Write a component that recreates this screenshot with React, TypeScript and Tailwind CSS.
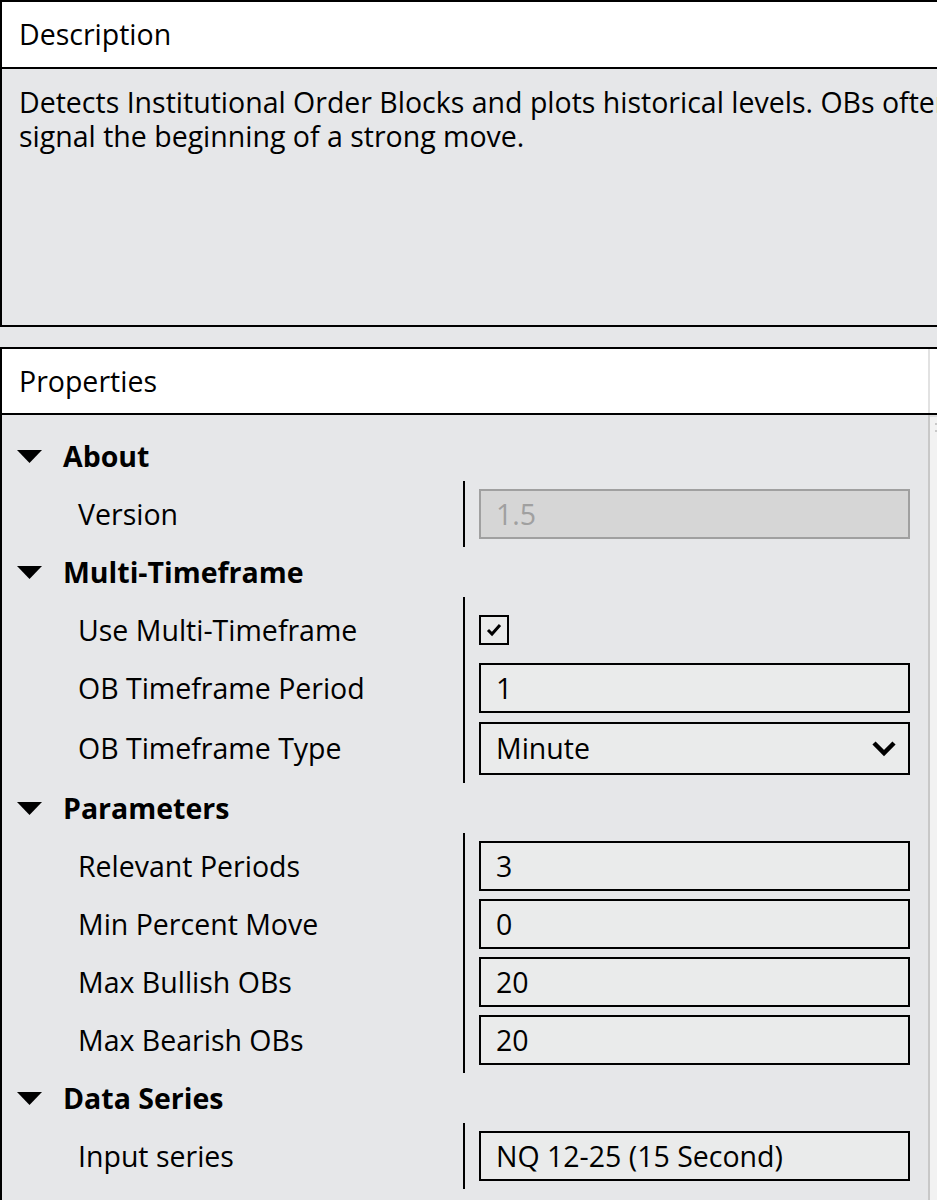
import React from 'react';

type Prop = { label: string; kind: 'disabled' | 'text' | 'check' | 'select'; value?: string };
type Group = { title: string; props: Prop[] };

const groups: Group[] = [
  { title: 'About', props: [{ label: 'Version', kind: 'disabled', value: '1.5' }] },
  {
    title: 'Multi-Timeframe',
    props: [
      { label: 'Use Multi-Timeframe', kind: 'check' },
      { label: 'OB Timeframe Period', kind: 'text', value: '1' },
      { label: 'OB Timeframe Type', kind: 'select', value: 'Minute' },
    ],
  },
  {
    title: 'Parameters',
    props: [
      { label: 'Relevant Periods', kind: 'text', value: '3' },
      { label: 'Min Percent Move', kind: 'text', value: '0' },
      { label: 'Max Bullish OBs', kind: 'text', value: '20' },
      { label: 'Max Bearish OBs', kind: 'text', value: '20' },
    ],
  },
  { title: 'Data Series', props: [{ label: 'Input series', kind: 'text', value: 'NQ 12-25 (15 Second)' }] },
];

const Triangle = () => (
  <svg width="25" height="13" viewBox="0 0 25 13">
    <polygon points="0,0 25,0 12.5,13" fill="#000" />
  </svg>
);

const Value = ({ p }: { p: Prop }) => {
  if (p.kind === 'check') {
    return (
      <div className="w-[30px] h-[30px] border-2 border-black bg-[#eaebeb] flex items-center justify-center">
        <svg width="16" height="14" viewBox="0 0 16 14">
          <polyline points="2,7 6,11 14,2" fill="none" stroke="#000" strokeWidth="3" />
        </svg>
      </div>
    );
  }
  if (p.kind === 'disabled') {
    return (
      <div className="w-[431px] h-[50px] border-2 border-[#a0a0a0] bg-[#d6d6d6] text-[#a0a0a0] flex items-center pl-[15px]">
        {p.value}
      </div>
    );
  }
  if (p.kind === 'select') {
    return (
      <div className="w-[431px] h-[53px] border-2 border-black bg-[#eaebeb] flex items-center justify-between pl-[15px] pr-[11px]">
        <span>{p.value}</span>
        <svg width="26" height="18" viewBox="0 0 26 18">
          <polyline points="3,4 13,14 23,4" fill="none" stroke="#000" strokeWidth="4.5" />
        </svg>
      </div>
    );
  }
  return (
    <div className="w-[431px] h-[50px] border-2 border-black bg-[#eaebeb] flex items-center pl-[15px]">{p.value}</div>
  );
};

export default function App() {
  return (
    <div className="w-[937px] h-[1200px] overflow-hidden bg-[#e6e7e9] text-black text-[28.5px] font-['Open_Sans',sans-serif]">
      <section className="w-[1000px] h-[327px] border-2 border-black flex flex-col">
        <div className="h-[67px] bg-white border-b-2 border-black flex items-center pl-[17px]">Description</div>
        <div className="flex-1 pl-[17px] pt-[16px] leading-[34px] whitespace-nowrap">
          Detects Institutional Order Blocks and plots historical levels. OBs often
          <br />
          signal the beginning of a strong move.
        </div>
      </section>

      <section className="mt-[20px] w-[1000px] h-[900px] border-2 border-black flex flex-col">
        <div className="h-[66px] bg-white border-b-2 border-black flex">
          <div className="w-[926px] flex items-center pl-[17px]">Properties</div>
          <div className="w-[2px] bg-[#e2e2e2]" />
        </div>
        <div className="flex flex-1">
          <div className="w-[926px] pt-[16px]">
            {groups.map((g) => (
              <div key={g.title}>
                <div className="h-[50px] flex items-center pl-[15px] gap-[21px]">
                  <Triangle />
                  <span className="font-bold">{g.title}</span>
                </div>
                <div className="flex">
                  <div className="w-[461px] py-1">
                    {g.props.map((p) => (
                      <div
                        key={p.label}
                        className={`${p.kind === 'select' ? 'h-[62px]' : 'h-[58px]'} flex items-center pl-[76px]`}
                      >
                        {p.label}
                      </div>
                    ))}
                  </div>
                  <div className="border-l-2 border-black py-1 pl-[14px]">
                    {g.props.map((p) => (
                      <div
                        key={p.label}
                        className={`${p.kind === 'select' ? 'h-[62px]' : 'h-[58px]'} flex items-center`}
                      >
                        <Value p={p} />
                      </div>
                    ))}
                  </div>
                </div>
              </div>
            ))}
          </div>
          <div className="w-[2px] bg-[#c8c8c8]" />
          <div className="flex-1 bg-[#f2f2f2] border-t-2 border-[#dedede] pt-[6px] pl-[5px] flex flex-col gap-[5px]">
            <div className="w-[4px] h-[2px] bg-[#c8c8c8]" />
            <div className="w-[4px] h-[2px] bg-[#c8c8c8]" />
          </div>
        </div>
      </section>
    </div>
  );
}
